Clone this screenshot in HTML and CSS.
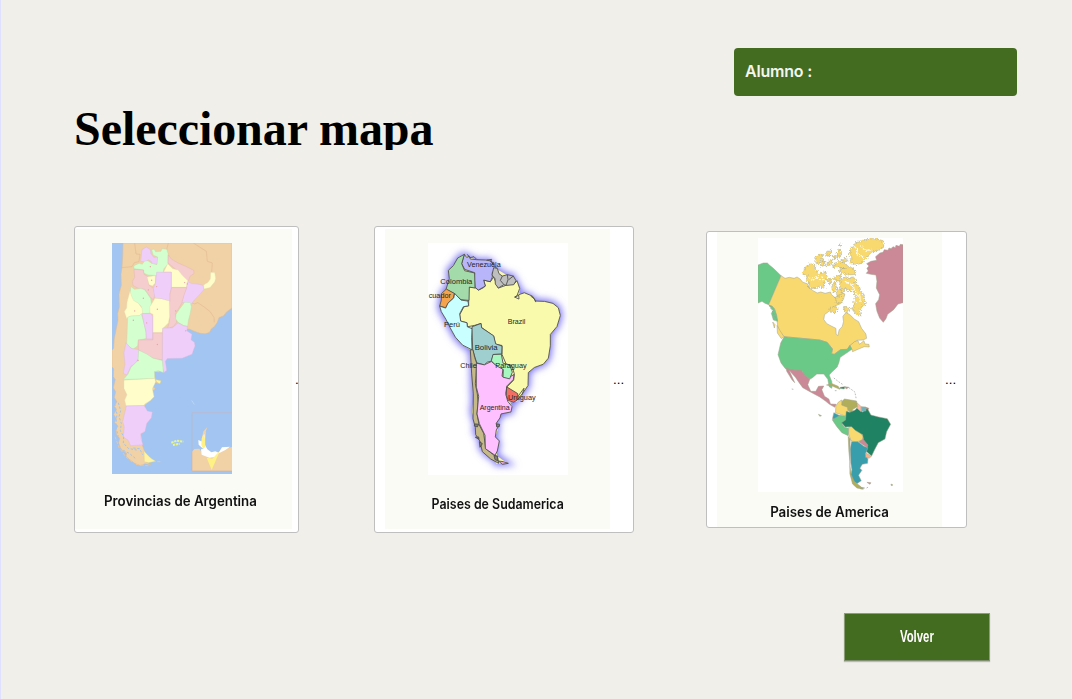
FILE: index.html
```html
<!DOCTYPE html>
<html lang="es">
<head>
<meta charset="utf-8">
<title>Seleccionar mapa</title>
<link rel="stylesheet" href="styles.css">
</head>
<body>
<main class="page">
  <header class="student"><span>Alumno :</span></header>
  <h1 class="title">Seleccionar mapa</h1>

  <section class="cards">
    <button class="card card-provinces">
      <span class="panel">
        <svg class="map" viewBox="126 68 360 694" preserveAspectRatio="none">
          <rect x="126" y="68" width="360" height="694" fill="#a3c5f1"/>
          <path fill="#f1d1a6" stroke="#dfbd93" stroke-width="1.5" d="M159 68H486V263L470 275 460 287 447 292 442 306 434 318 424 326 418 337 405 341 390 339 375 334 357 326 340 326 270 450 240 560 215 670 226 700 250 723 228 726 242 734 225 731 212 737 194 730 178 718 168 709 170 700 158 692 151 683 146 668 149 655 140 643 138 628 144 618 134 607 139 595 131 583 139 570 133 558 141 545 133 532 137 515 130 503 136 478 130 470 131 446 126 440V390L131 384 133 354 138 330 144 300 143 280 148 260 147 222 154 195 153 162 156 142 158 112Z"/>
          <path fill="none" stroke="#e0b48c" stroke-width="1.5" d="M156 142L186 139 193 127 207 124 210 102 198 101 194 68M295 68L290 88M370 68L409 93 412 123 427 128 425 155M364 247L374 251 383 247 405 262 421 275 432 292 433 306"/>
          <path fill="#a3c5f1" d="M277 420L290 415 330 416 366 403 376 378 486 290V540H350L245 500 257 484 253 455 278 458 290 450ZM248 510L300 500V720H262L240 710 219 674 212 641 225 634 230 610 244 593 247 576 232 573 222 557 240 542 252 530Z"/>
          <g stroke-width="1.2" stroke-linejoin="round">
            <path fill="#efcffa" stroke="#d9b9df" d="M216 88L229 80 241 88 243 100 251 111 263 110 262 132 248 132 243 122 234 118 230 126 212 123Z"/>
            <path fill="#d4ffce" stroke="#b5dfb0" d="M245 89L252 86 257 94 273 93 276 85 290 87 294 99V131L282 145 279 157 264 166 234 164 221 158V149L192 145V136L208 129 217 132 223 123 234 121 244 129 261 133 263 110 250 105Z"/>
            <path fill="#f6cdcf" stroke="#dfb3b1" d="M295 104L305 117 324 128 347 138 371 150 372 160 360 168 354 185 337 166 322 151 294 128Z"/>
            <path fill="#fffecb" stroke="#e4ddb1" d="M293 130L308 145 324 149 337 165 355 183 349 201H304V155L281 155Z"/>
            <path fill="#f6cdcf" stroke="#dfb3b1" d="M192 147L220 149 222 162 232 168 237 195 250 204 255 222 250 239 238 227 224 207 209 206 189 196 187 183 194 172Z"/>
            <path fill="#fffecb" stroke="#e4ddb1" d="M231 170L256 166V188L247 197 237 193Z"/>
            <path fill="#efcffa" stroke="#d9b9df" d="M260 156H304V202L300 221 300 244 278 236 255 234 250 205 256 190Z"/>
            <path fill="#efcffa" stroke="#d9b9df" d="M352 184L366 190 385 192 399 195 402 207 390 222 373 239 363 253 335 246 342 220 350 202Z"/>
            <path fill="#fffecb" stroke="#e4ddb1" d="M422 157L434 157 437 174 434 185 420 202 402 206 401 194 414 186 421 176Z"/>
            <path fill="#f6cdcf" stroke="#dfb3b1" d="M305 202H350L342 225 335 249 324 268 316 280 320 306 310 319 293 325 297 309 300 288 295 260 300 242 300 221Z"/>
            <path fill="#d4ffce" stroke="#b5dfb0" d="M344 246L361 247 364 260 360 283 355 301 353 318 341 316 325 307 317 296 318 282 329 266Z"/>
            <path fill="#d4ffce" stroke="#b5dfb0" d="M183 199L193 207 212 205 223 208 232 220 242 235 244 250 240 279 217 280 213 258 204 249 189 242 180 219Z"/>
            <path fill="#fffecb" stroke="#e4ddb1" d="M180 212L184 226 191 241 205 249 216 264 218 280 208 287 181 289 170 295 163 274 170 263 171 246Z"/>
            <path fill="#fffecb" stroke="#e4ddb1" d="M255 234L275 236 298 242V260L299 289 295 308 279 324 276 338H249V282L240 278 239 260 248 246Z"/>
            <path fill="#d4ffce" stroke="#b5dfb0" d="M173 291L183 287 208 286 214 280 222 309 228 337V355L205 360 203 377 189 387 170 374 171 347Z"/>
            <path fill="#efcffa" stroke="#d9b9df" d="M216 280H241L248 288V356H229L228 334 221 306Z"/>
            <path fill="#f6cdcf" stroke="#dfb3b1" d="M249 338H277V419L250 415 235 407 218 399 205 388V359H249Z"/>
            <path fill="#efcffa" stroke="#d9b9df" d="M278 324L307 323 324 308 342 317 353 319 350 332 366 342 363 359 373 366 375 377 366 402 336 414 292 415 286 423 290 450 282 457 277 444Z"/>
            <path fill="#efcffa" stroke="#d9b9df" d="M168 368L184 385 206 388V414L196 430 183 438 171 464 160 460 165 433 162 398Z"/>
            <path fill="#d4ffce" stroke="#b5dfb0" d="M206 390L231 402 249 414 277 421 280 457 265 452 253 454 254 475 160 478 174 462 183 441 204 421Z"/>
            <path fill="#fffecb" stroke="#e4ddb1" d="M162 480L254 475 257 485 247 506 252 530 240 542 224 552 222 557 168 557 164 540 171 524 162 505Z"/>
            <path fill="#efcffa" stroke="#d9b9df" d="M169 558L222 556 232 573 247 576 244 593 230 610 225 634 212 641 213 657 219 674 182 677 174 660 160 651 163 620 158 605Z"/>
            <path fill="#fff4a3" stroke="#dccf8e" d="M222 693L232 704 243 715 257 724 235 728 223 725ZM257 478L273 482 270 491 260 487Z"/>
          </g>
          <path fill="none" stroke="#a3c5f1" stroke-width="3" stroke-dasharray="7 5" d="M145 548L152 572 147 590 154 610 151 632 161 649 160 669 175 685 200 690M160 691L178 700 196 715M190 684L209 686 218 704M134 551L141 582 137 619 145 647"/>
          <path fill="none" stroke="#e9c7a0" stroke-width="3" stroke-dasharray="9 5" d="M135 650L147 682 167 710 190 729M198 733L240 738M262 725H275M258 486L269 492"/>
          <path fill="none" stroke="#e7f58e" stroke-width="6" stroke-dasharray="7 2" d="M304 668L320 662 340 665M309 675L329 671"/>
          <path fill="#f1d1a6" d="M366 695L373 687 388 686 399 702 432 711 456 686 470 685 486 681V753H366Z"/>
          <path fill="#fff" d="M385 660L395 664 400 640 406 634 405 675 412 688 424 697 436 694 446 698 456 682 480 680 466 690 447 700 435 711 418 713 395 704 393 688 400 687 386 674Z"/>
          <path fill="#f1d1a6" d="M396 652L400 634 412 621 404 643 402 660Z"/>
          <path fill="#fff183" d="M395 655L401 642 405 656 406 679 400 688 394 675ZM410 713L427 716 450 692 425 750Z"/>
          <path fill="none" stroke="#c9b1b3" stroke-width="1.5" d="M366 753V578H486M366 753H486"/>
          <path fill="none" stroke="#c9dcec" stroke-width="2" d="M365 541L373 553"/>
          <g fill="#e6a1a5"><circle cx="241" cy="139" r="2"/><circle cx="245" cy="180" r="2"/><circle cx="260" cy="199" r="2"/><circle cx="220" cy="234" r="2"/><circle cx="262" cy="267" r="2"/><circle cx="194" cy="272" r="2"/><circle cx="190" cy="300" r="2"/><circle cx="230" cy="308" r="2"/><circle cx="262" cy="373" r="2"/><circle cx="317" cy="272" r="2"/><circle cx="344" cy="187" r="2"/><circle cx="352" cy="191" r="2"/><circle cx="235" cy="209" r="2"/><circle cx="347" cy="332" r="2"/><circle cx="204" cy="421" r="2"/></g>
        </svg>
        <span class="caption">Provincias de Argentina</span>
      </span>
      <span class="more">...</span>
    </button>

    <button class="card card-south">
      <span class="panel">
        <svg class="map" viewBox="174 68 420 695" preserveAspectRatio="none">
          <defs>
            <filter id="halo" x="-20%" y="-20%" width="140%" height="140%"><feGaussianBlur stdDeviation="11"/></filter>
            <path id="continent" d="M283 102L268 109 259 123 245 140 235 150 238 175 228 207 216 217 213 242 209 257 214 274 228 297 240 321 256 350 278 374 301 388 307 440 308 500 310 540 306 575 318 612 315 635 331 655 332 680 350 703 372 714 379 729 415 728 397 717 382 706 378 694 386 671 376 649 383 628 378 609 389 592 393 580 423 574 427 557 420 546 443 542 458 518 474 495 475 456 493 441 520 431 535 413 541 376 541 342 561 318 571 285 565 262 549 249 524 243 497 242 478 225 448 219 449 204 435 182 428 166 410 164 384 148 370 139 363 123 349 119 325 122 307 114 292 108Z"/>
          </defs>
          <rect x="174" y="68" width="420" height="695" fill="#fff"/>
          <use href="#continent" fill="#7d76ee" stroke="#827af0" stroke-width="14" filter="url(#halo)"/>
          <use href="#continent" fill="#f9faab"/>
          <g stroke="#4b4b4b" stroke-width="2.6" stroke-linejoin="round">
            <path fill="#f9faab" d="M296 200L315 201 326 209 340 202 346 197 341 179 361 184 371 170 385 203 413 193 433 190 441 181 449 204 441 226 434 230 447 236 446 223 463 217 487 227 497 242 524 243 549 249 565 262 571 285 561 318 541 342V376L535 413 520 431 493 441 475 456 474 495 458 518 443 537 410 500 431 479 433 460 425 434 409 432 396 402 396 375 376 371 371 347 333 320 333 309 313 315 292 319 291 307 272 302 269 283 282 259 296 256Z"/>
            <path fill="#b9b5fa" d="M283 102L290 111 298 108 301 116 320 118 347 119 363 122 370 133 380 144 367 156 367 170 361 184 341 179 346 197 325 209 315 201 313 174 314 157 284 147 275 130Z"/>
            <path fill="#a4dbaa" d="M283 102L275 130 284 151 314 158 315 203 298 200 297 240 273 238 253 220 228 207 238 175 235 150 250 136 263 113Z"/>
            <path fill="#f6a34d" d="M229 206L253 219 251 232 235 247 227 262 209 257 214 239 214 220Z"/>
            <path fill="#c9ffff" d="M254 219L273 239 294 242 296 256 280 259 269 280 272 302 291 307 292 319 307 325 305 352 306 388 278 374 256 350 240 321 228 297 214 274 209 257 227 263 234 248 251 233Z"/>
            <path fill="#a0cfcf" d="M306 319L333 309 335 322 371 346 377 370 396 377 395 401 370 402 364 422 352 425 343 433 320 427 308 388Z"/>
            <path fill="#c5b889" d="M301 388L309 388 314 411 320 428 318 465 316 490 322 520 324 546 321 580 327 612 341 638 345 668 347 684 371 703 382 707 386 728 362 715 337 693 330 662 317 642 316 620 309 595 310 520 305 460Z"/>
            <path fill="#ffc0ff" d="M319 428L343 433 364 423 378 434 399 445 396 467 416 471 432 462 430 477 411 496 407 519 413 542 426 558 423 574 393 580 390 592 378 609 386 616 379 628 376 649 388 661 382 691 375 704 346 684 345 644 328 609 321 580 326 527 319 500Z"/>
            <path fill="#a9f7c0" d="M369 402L394 401 399 428 419 433 427 455 419 475 399 470 400 447 378 435 364 421Z"/>
            <path fill="#f36f64" d="M410 499L443 519 444 537 431 545 415 540 409 525Z"/>
            <path fill="#bfbfbf" d="M371 142L382 144 387 160 397 167 412 163 430 167 438 181 431 193 409 195 401 193 385 203 376 191 375 175 366 164Z"/>
            <path fill="none" d="M397 167L391 180 402 193M412 163L414 178 408 195M430 167L416 178M292 102L300 112 312 109 320 117M350 119L365 117 362 124 373 128M434 230L446 225M482 227L493 235 497 245M443 529L456 511 462 503 457 522"/>
            <path fill="#e8a7d4" d="M385 721L400 723 415 728 397 731Z"/>
            <path fill="#837d76" d="M314 610L326 611 322 619 313 616ZM316 650L326 649 327 656ZM328 663L337 669 330 680ZM372 705L383 707 383 720 375 717ZM379 610L389 611 388 618 380 619Z"/>
          </g>
          <g class="map-labels">
            <text x="291" y="139" textLength="101" lengthAdjust="spacingAndGlyphs">Venezuela</text>
            <text x="211" y="190" textLength="96" lengthAdjust="spacingAndGlyphs">Colombia</text>
            <text x="176" y="233" textLength="67" lengthAdjust="spacingAndGlyphs">cuador</text>
            <text x="222" y="321" textLength="48" lengthAdjust="spacingAndGlyphs">Perú</text>
            <text x="413" y="312" textLength="53" lengthAdjust="spacingAndGlyphs">Brazil</text>
            <text x="314" y="388" textLength="69" lengthAdjust="spacingAndGlyphs">Bolivia</text>
            <text x="271" y="443" textLength="49" lengthAdjust="spacingAndGlyphs">Chile</text>
            <text x="376" y="443" textLength="94" lengthAdjust="spacingAndGlyphs">Paraguay</text>
            <text x="414" y="539" textLength="83" lengthAdjust="spacingAndGlyphs">Uruguay</text>
            <text x="329" y="569" textLength="90" lengthAdjust="spacingAndGlyphs">Argentina</text>
          </g>
        </svg>
        <span class="caption">Paises de Sudamerica</span>
      </span>
      <span class="more">...</span>
    </button>

    <button class="card card-america">
      <span class="panel">
        <svg class="map" viewBox="174 40 434 762" preserveAspectRatio="none">
          <defs>
            <filter id="coast" x="-5%" y="-5%" width="110%" height="110%">
              <feTurbulence type="fractalNoise" baseFrequency=".22" numOctaves="2" seed="4" result="noise"/>
              <feDisplacementMap in="SourceGraphic" in2="noise" scale="15" xChannelSelector="R" yChannelSelector="G"/>
            </filter>
          </defs>
          <rect x="174" y="40" width="434" height="762" fill="#fff"/>
          <g stroke="#a1a28b" stroke-width="1.5" stroke-linejoin="round">
            <path fill="#cb8897" d="M608 60L600 59 597 65 587 62 585 69 578 66 572 72 566 70 563 77 552 75 548 83 539 85 526 96 529 107 512 110 499 117 506 124 500 131 504 139 498 146 512 149 527 151 530 170 528 190 538 210 535 225 526 237 530 260 538 280 549 293 557 282 562 269 580 255 593 238 608 234Z"/>
            <path fill="#6ac987" d="M174 121L190 115 202 115 208 121 220 131 243 153 206 240 195 236 186 230 174 235Z"/>
            <path fill="#f8d970" d="M243 153L255 161 268 158 282 161 291 157 301 164 307 172 323 178 326 189 339 198 351 205 362 202 375 206 391 202 394 210 407 221 418 218 424 202 434 208 430 223 421 237 404 244 390 257 373 270 371 285 380 297 393 304 407 311 408 329 413 333 417 315 426 306 430 291 428 275 438 263 451 272 462 283 475 291 484 311 497 328 499 341 488 346 470 347 450 362 441 374 421 375 402 389 394 387 397 373 381 353 359 346 252 336 235 318 230 282 225 255 215 246 206 240Z"/>
            <path fill="#f8d970" d="M449 363L463 351 473 348 478 359 491 348 494 358 506 359 507 367 492 366 473 374 457 381 455 373Z"/>
            <g filter="url(#coast)">
              <path fill="#f8d970" d="M419 172L430 158 443 161 456 157 466 162 466 176 479 189 482 204 493 211 490 226 498 238 484 246 479 261 482 275 468 269 454 252 462 239 457 228 469 217 458 198 441 197 433 189 432 207 420 195Z"/>
              <path fill="#f8d970" d="M307 144L318 125 332 116 347 122 345 136 358 146 377 141 381 158 371 178 375 192 359 185 342 192 321 187 329 178 317 165 325 153 313 151Z"/>
              <path fill="#f8d970" d="M452 70L467 54 486 48 504 43 525 41 547 48 551 67 538 76 522 79 503 96 491 104 484 116 467 120 448 112 455 98 447 93Z"/>
              <path fill="#f8d970" d="M430 130L448 125 462 134 466 149 446 151 429 147 414 140ZM402 118L418 109 438 118 441 130 422 132 413 126 398 129ZM397 160L413 153 424 151 420 168 404 169ZM382 166L390 160 395 173 388 180ZM398 178L406 173 410 195 399 205 394 189ZM413 195L423 191 423 211 413 218 408 205ZM344 98L359 89 371 90 363 101 374 109 360 110 354 120 345 107ZM376 86L390 76 396 81 389 93 378 95ZM382 112L397 106 392 121 378 123ZM412 82L417 73 426 82 419 94 412 102ZM422 105L440 98 440 110 426 113ZM406 217L418 210 430 221 422 239 409 235ZM390 251L405 243 414 253 402 264 388 262ZM430 249L439 244 449 256 438 265ZM360 112L374 110 374 122 362 126ZM400 92L408 90 408 102 400 104ZM418 58L424 62 418 66Z"/>
              <path fill="none" stroke="#fff" stroke-width="3" d="M462 65L472 75 469 87 486 95 492 104M480 63L498 77 513 76M328 160L341 166 351 155 359 166M437 169L447 180 459 183 466 205 479 214 480 234M458 219L466 234M365 155L369 169"/>
            </g>
            <path fill="#6ac987" d="M207 242L216 244 223 252 230 272 233 290 220 286 214 266 219 258ZM252 336L359 346 381 353 397 373 394 387 402 389 421 375 441 374 449 362 455 374 438 386 420 398 416 414 411 427 393 444 387 451 395 471 395 491 387 486 383 464 371 448 350 448 337 459 329 464 312 451 306 440 285 438 256 432 243 415 234 390 242 355Z"/>
            <path fill="#f8d970" d="M231 302L240 318 251 335 244 342 232 325ZM218 292L225 300 223 310Z"/>
            <path fill="#cb8897" d="M258 431L285 437 304 437 313 451 329 464 323 480 332 500 347 500 355 485 371 484 365 495 373 515 386 523 391 538 408 539 404 548 388 539 377 530 359 517 331 502 308 489 297 474 286 458 267 437 275 454 284 474 276 466 260 440Z"/>
            <path fill="#b0ad5b" d="M379 481L396 477 414 485 419 494 398 485ZM433 523L469 529 472 546 458 554 453 567 440 552 424 547 426 529Z"/>
            <path fill="#1f8262" d="M421 488L434 486 432 493 418 491Z"/>
            <path fill="#cb8897" d="M434 486L446 488 438 493ZM476 652L486 639 495 648 504 655 502 669 488 660ZM497 548L506 551 500 560ZM500 773L512 774 509 779Z"/>
            <path fill="#f8d970" d="M424 526L424 541 442 548 443 562 436 574 420 569 406 564 407 544 414 533ZM446 605L459 606 464 616 480 623 489 636 486 645 470 652 453 649 445 628Z"/>
            <path fill="#389eab" d="M401 564L419 573 407 584 397 582Z"/>
            <path fill="#6ac987" d="M420 572L436 575 437 586 425 597 433 608 445 611 444 633 425 624 410 606 396 585Z"/>
            <path fill="#1f8262" d="M438 560L449 563 465 556 470 550 487 562 501 551 512 571 535 577 561 582 571 599 559 621 554 643 534 654 523 675 514 694 498 680 503 661 490 645 487 630 465 617 454 606 435 607 424 594 436 586Z"/>
            <path fill="#ffbaa7" d="M471 535L483 546 482 561 472 552Z"/>
            <path fill="#6fb3bd" d="M483 546L497 547 497 559 484 560Z"/>
            <path fill="#389eab" d="M454 651L473 651 491 665 503 669 496 688 503 704 502 716 486 719 479 731 485 737 475 752 483 768 470 777 458 769 452 751 455 735 452 715 450 673ZM478 787L493 790 482 793Z"/>
            <path fill="#b0ad5b" d="M444 635L450 643 449 675 449 723 453 750 463 771 482 786 489 794 470 790 457 778 449 747 449 710 446 681Z"/>
            <path fill="#f4b28c" d="M496 684L513 695 507 701 496 698Z"/>
            <path fill="#b0ad5b" d="M355 569L364 573 359 575ZM572 778L578 781 573 783Z"/>
            <path fill="none" stroke="#999" stroke-width="2" stroke-dasharray="5 4" d="M401 460L415 471 427 479M446 489L464 502 468 523M275 493L280 494M404 498H411M499 790L506 786M208 242L220 266 232 289"/>
          </g>
        </svg>
        <span class="caption">Paises de America</span>
      </span>
      <span class="more">...</span>
    </button>
  </section>

  <footer class="actions"><button class="back"><span>Volver</span></button></footer>
</main>
</body>
</html>
```
FILE: styles.css
```css
* { box-sizing: border-box; }
body { margin: 0; background: #f0efea; }
.page {
  width: 1072px;
  height: 699px;
  overflow: hidden;
  border-left: 1px solid #dfdfff;
  padding: 48px 55px 0 73px;
  display: flex;
  flex-direction: column;
}
.student {
  align-self: flex-end;
  width: 283px;
  height: 48px;
  flex: none;
  border-radius: 4px;
  background: #446c20;
  color: #f3f5ef;
  font: 600 16px/47px Inter, sans-serif;
  letter-spacing: -.2px;
  padding-left: 11px;
}
.title {
  margin: 8px 0 0;
  height: 46px;
  flex: none;
  overflow: hidden;
  color: #000;
  font: bold 48px/50px "Liberation Serif", serif;
  letter-spacing: -.06px;
  white-space: nowrap;
}
.cards {
  display: flex;
  align-items: flex-start;
  height: 307px;
  flex: none;
  margin-top: 76px;
}
.card {
  display: flex;
  flex: none;
  padding: 0;
  background: #fff;
  border: 1px solid #bfbfbf;
  border-radius: 3px;
  overflow: hidden;
  color: #000;
}
.card-provinces { width: 225px; height: 307px; padding-top: 2px; }
.card-south { width: 260px; height: 307px; margin-left: 75px; padding: 2px 0 0 10px; }
.card-america { width: 261px; height: 297px; margin: 5px 0 0 72px; padding-left: 10px; }
.panel {
  display: flex;
  flex-direction: column;
  align-items: center;
  flex: none;
  width: 225px;
  height: 300px;
  background: #fafbf5;
}
.card-provinces .panel { width: 217px; padding-right: 7px; }
.card-america .panel { height: 295px; }
.map { display: block; flex: none; }
.card-provinces .map { width: 120px; height: 231px; margin: 13.5px 16px 0 0; }
.card-south .map { width: 140px; height: 232px; margin-top: 13.5px; }
.card-america .map { width: 145px; height: 254px; margin: 6px 0 0 1px; }
.caption {
  color: #111;
  font: 600 14px/20px Inter, sans-serif;
  white-space: nowrap;
}
.card-provinces .caption { margin-top: 17.5px; transform: scaleX(.95); }
.card-south .caption { margin-top: 19.5px; transform: scaleX(.885); }
.card-america .caption { margin-top: 10px; transform: scaleX(.95); }
.more {
  margin: 143px 0 0 3px;
  font: 13.3px/15px "Liberation Sans", sans-serif;
}
.card-america .more { margin-top: 140px; }
.map-labels {
  fill: #252525;
  font: 24px "Liberation Sans", sans-serif;
}
.actions {
  display: flex;
  justify-content: flex-end;
  margin-top: 80px;
  padding-right: 27px;
}
.back {
  width: 146px;
  height: 48px;
  padding: 0;
  border: 1px solid #8b9e78;
  border-bottom-color: #7f8d70;
  background: #446c20;
  box-shadow: 0 1px 1px #b9b9b5;
  color: #fff;
  font: bold 16px/46px "Liberation Sans", sans-serif;
}
.back span { display: inline-block; transform: scaleX(.71); }
```
